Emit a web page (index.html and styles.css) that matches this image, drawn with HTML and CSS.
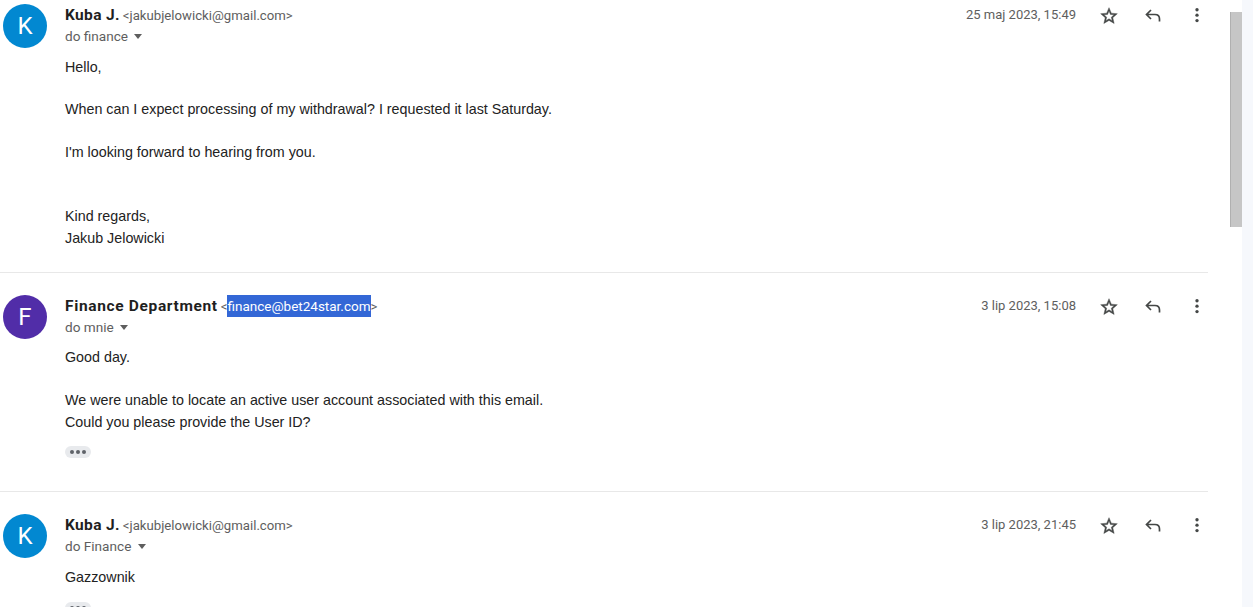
FILE: index.html
```html
<!DOCTYPE html>
<html lang="en">
<head>
    <meta charset="UTF-8">
    <title>Gmail thread</title>
    <link rel="stylesheet" href="styles.css">
</head>
<body>
    <div class="page">
        <div class="thread">
            <!-- Message 1 -->
            <div class="message message-first">
                <div class="avatar avatar-blue">K</div>
                <div class="content">
                    <div class="head">
                        <div class="sender">
                            <div class="from"><span class="name">Kuba J.</span> <span class="email">&lt;jakubjelowicki@gmail.com&gt;</span></div>
                            <div class="to">do finance <span class="caret"></span></div>
                        </div>
                        <div class="date">25 maj 2023, 15:49</div>
                        <div class="actions">
                            <svg class="icon icon-star" viewBox="0 0 24 24"><path d="M22 9.24l-7.19-.62L12 2 9.19 8.63 2 9.24l5.46 4.73L5.82 21 12 17.27 18.18 21l-1.63-7.03L22 9.24zM12 15.4l-3.76 2.27 1-4.28-3.32-2.88 4.38-.38L12 6.1l1.71 4.04 4.38.38-3.32 2.88 1 4.28L12 15.4z"/></svg>
                            <svg class="icon icon-reply" viewBox="0 0 20 20"><path d="M8 4L3.5 8.5 8 13M3.5 8.5H12C14.8 8.5 16.5 10.5 16.5 13V15.5"/></svg>
                            <svg class="icon" viewBox="0 0 24 24"><circle cx="12" cy="4.5" r="2"/><circle cx="12" cy="11" r="2"/><circle cx="12" cy="17.5" r="2"/></svg>
                        </div>
                    </div>
                    <div class="body body-first">
                        <p>Hello,</p>
                        <p class="gap">When can I expect processing of my withdrawal? I requested it last Saturday.</p>
                        <p class="gap">I'm looking forward to hearing from you.</p>
                        <p class="gap-big">Kind regards,</p>
                        <p>Jakub Jelowicki</p>
                    </div>
                </div>
            </div>

            <!-- Message 2 -->
            <div class="message message-second">
                <div class="avatar avatar-purple">F</div>
                <div class="content">
                    <div class="head">
                        <div class="sender">
                            <div class="from"><span class="name name-long">Finance Department</span> <span class="email">&lt;<span class="selected">finance@bet24star.com</span>&gt;</span></div>
                            <div class="to">do mnie <span class="caret"></span></div>
                        </div>
                        <div class="date">3 lip 2023, 15:08</div>
                        <div class="actions">
                            <svg class="icon icon-star" viewBox="0 0 24 24"><path d="M22 9.24l-7.19-.62L12 2 9.19 8.63 2 9.24l5.46 4.73L5.82 21 12 17.27 18.18 21l-1.63-7.03L22 9.24zM12 15.4l-3.76 2.27 1-4.28-3.32-2.88 4.38-.38L12 6.1l1.71 4.04 4.38.38-3.32 2.88 1 4.28L12 15.4z"/></svg>
                            <svg class="icon icon-reply" viewBox="0 0 20 20"><path d="M8 4L3.5 8.5 8 13M3.5 8.5H12C14.8 8.5 16.5 10.5 16.5 13V15.5"/></svg>
                            <svg class="icon" viewBox="0 0 24 24"><circle cx="12" cy="4.5" r="2"/><circle cx="12" cy="11" r="2"/><circle cx="12" cy="17.5" r="2"/></svg>
                        </div>
                    </div>
                    <div class="body body-second">
                        <p>Good day.</p>
                        <p class="gap">We were unable to locate an active user account associated with this email.</p>
                        <p>Could you please provide the User ID?</p>
                    </div>
                    <div class="more"><span></span><span></span><span></span></div>
                </div>
            </div>

            <!-- Message 3 -->
            <div class="message message-last">
                <div class="avatar avatar-blue">K</div>
                <div class="content">
                    <div class="head">
                        <div class="sender">
                            <div class="from"><span class="name">Kuba J.</span> <span class="email">&lt;jakubjelowicki@gmail.com&gt;</span></div>
                            <div class="to">do Finance <span class="caret"></span></div>
                        </div>
                        <div class="date">3 lip 2023, 21:45</div>
                        <div class="actions">
                            <svg class="icon icon-star" viewBox="0 0 24 24"><path d="M22 9.24l-7.19-.62L12 2 9.19 8.63 2 9.24l5.46 4.73L5.82 21 12 17.27 18.18 21l-1.63-7.03L22 9.24zM12 15.4l-3.76 2.27 1-4.28-3.32-2.88 4.38-.38L12 6.1l1.71 4.04 4.38.38-3.32 2.88 1 4.28L12 15.4z"/></svg>
                            <svg class="icon icon-reply" viewBox="0 0 20 20"><path d="M8 4L3.5 8.5 8 13M3.5 8.5H12C14.8 8.5 16.5 10.5 16.5 13V15.5"/></svg>
                            <svg class="icon" viewBox="0 0 24 24"><circle cx="12" cy="4.5" r="2"/><circle cx="12" cy="11" r="2"/><circle cx="12" cy="17.5" r="2"/></svg>
                        </div>
                    </div>
                    <div class="body">
                        <p>Gazzownik</p>
                    </div>
                    <div class="more"><span></span><span></span><span></span></div>
                </div>
            </div>
        </div>

        <div class="scrollbar">
            <div class="thumb"></div>
        </div>
        <div class="side"></div>
    </div>
</body>
</html>
```

FILE: styles.css
```css
html, body {
    margin: 0;
    height: 100%;
    overflow: hidden;
    background-color: #fff;
}
p {
    margin: 0;
}
.page {
    display: flex;
    height: 607px;
    overflow: hidden;
    font-family: "Liberation Sans", Arial, sans-serif;
}
.thread {
    width: 1208px;
    margin-right: 22px;
    flex: none;
}
.message {
    display: flex;
    gap: 18px;
    padding-left: 3px;
    border-bottom: 1px solid #e8e8e8;
}
.message-first {
    height: 273px;
    padding-top: 4px;
    box-sizing: border-box;
}
.message-second {
    height: 219px;
    padding-top: 22px;
    box-sizing: border-box;
}
.message-last {
    padding-top: 22px;
    border-bottom: none;
}
.avatar {
    width: 44px;
    height: 44px;
    flex: none;
    border-radius: 50%;
    color: #fff;
    font-family: Roboto, sans-serif;
    font-size: 24px;
    line-height: 44px;
    text-align: center;
}
.avatar-blue {
    background-color: #0288d1;
}
.avatar-purple {
    background-color: #512da8;
}
.content {
    flex: 1;
}
.head {
    display: flex;
    align-items: flex-start;
}
.sender {
    flex: 1;
    font-family: Roboto, sans-serif;
}
.from {
    height: 22px;
    line-height: 22px;
}
.name {
    font-size: 15.5px;
    font-weight: 700;
    color: #1f1f1f;
    letter-spacing: 0.35px;
}
.name-long {
    letter-spacing: 0.65px;
}
.email {
    margin-left: -1px;
    font-size: 13.2px;
    color: #5e5e5e;
}
.selected {
    background-color: #3367d6;
    color: #fff;
    font-size: 13.5px;
    padding: 3px 0;
}
.to {
    font-size: 13.6px;
    color: #5e5e5e;
    line-height: 20px;
}
.caret {
    display: inline-block;
    width: 0;
    height: 0;
    margin-left: 3px;
    vertical-align: 2px;
    border-left: 4.5px solid transparent;
    border-right: 4.5px solid transparent;
    border-top: 5px solid #5e5e5e;
}
.date {
    font-family: Roboto, sans-serif;
    font-size: 13px;
    line-height: 22px;
    color: #5e5e5e;
}
.actions {
    display: flex;
    gap: 24px;
    margin-left: 23px;
    margin-right: 1px;
}
.icon {
    width: 20px;
    height: 20px;
    fill: #444746;
    margin-top: 2px;
}
.icon-star {
    stroke: #444746;
    stroke-width: 0.5;
}
.icon-reply {
    fill: none;
    stroke: #444746;
    stroke-width: 1.7;
}
.body {
    margin-top: 11px;
    font-size: 14.3px;
    line-height: 21.5px;
    color: #222;
}
.body-first {
    margin-top: 10.5px;
}
.body-first .gap-big {
    margin-top: 43.4px;
}
.body-second {
    margin-top: 10px;
}
.body-second .gap {
    margin-top: 21.5px;
}
.gap {
    margin-top: 21px;
}
.gap-big {
    margin-top: 43px;
}
.more {
    display: flex;
    gap: 2px;
    align-items: center;
    justify-content: center;
    width: 26px;
    height: 12px;
    margin-top: 13px;
    background-color: #e8eaed;
    border-radius: 6px;
}
.body-second + .more {
    margin-top: 12.5px;
}
.more span {
    width: 4px;
    height: 4px;
    border-radius: 50%;
    background-color: #5f6368;
}
.scrollbar {
    width: 12px;
    flex: none;
    padding-top: 12px;
    box-sizing: border-box;
}
.thumb {
    height: 215px;
    background-color: #c6c6c6;
    border-left: 1px solid #b0b0b0;
    box-sizing: border-box;
}
.side {
    flex: 1;
    background-color: #f6f8fc;
}
```
